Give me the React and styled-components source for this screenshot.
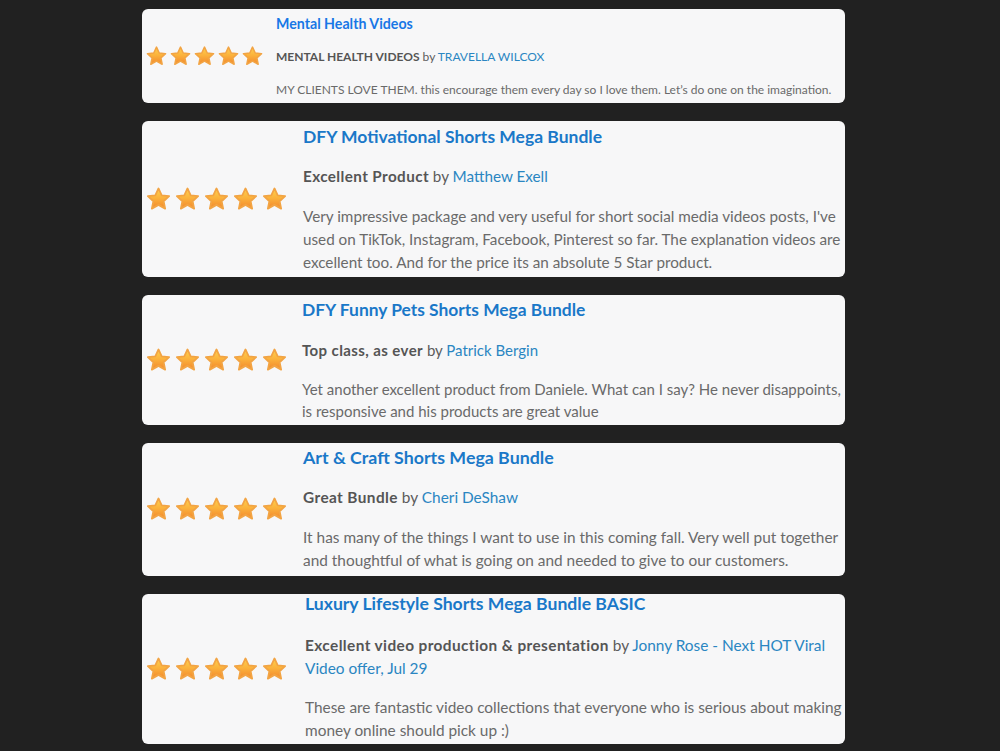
import React from "react";
import styled, { createGlobalStyle } from "styled-components";

const GlobalStyle = createGlobalStyle`
  html, body {
    margin: 0;
    padding: 0;
    background: #212121;
  }
  body {
    font-family: Lato, "Open Sans", "Noto Sans", sans-serif;
  }
`;

const Page = styled.main`
  display: flex;
  flex-direction: column;
  gap: 18px;
  padding: 9px 0 0 142px;
  width: 703px;
  min-height: 751px;
  box-sizing: content-box;
`;

const Card = styled.article`
  display: flex;
  align-items: stretch;
  background: #f7f7f8;
  border-radius: 6px;
  overflow: hidden;
`;

const StarCol = styled.div`
  flex: 0 0 ${(p) => p.$width}px;
  display: flex;
  align-items: center;
  padding-left: 3px;
  box-sizing: border-box;
  gap: ${(p) => p.$gap}px;
`;

const Content = styled.div`
  flex: 1;
  min-width: 0;
  display: flex;
  flex-direction: column;
  gap: ${(p) => p.$gap}px;
  padding: ${(p) => p.$top}px 2px ${(p) => p.$bottom}px 0;
  font-size: ${(p) => p.$size}px;
  line-height: ${(p) => p.$lh}px;
`;

const Title = styled.h3`
  margin: 0 0 ${(p) => p.$extra || 0}px;
  font-size: ${(p) => p.$size}px;
  line-height: ${(p) => p.$lh}px;
  font-weight: 700;
  color: ${(p) => p.$color || "#1a78c8"};
`;

const Headline = styled.p`
  margin: 0;
  color: #5c5c5c;
`;

const Strong = styled.strong`
  font-weight: 700;
  color: #555;
  letter-spacing: ${(p) => p.$ls || 0}px;
`;

const Author = styled.span`
  color: #2a86c2;
`;

const Body = styled.p`
  margin: 0;
  color: #6a6a6a;
`;

function Star({ size }) {
  return (
    <svg width={size} height={size} viewBox="0 0 24 24" aria-hidden="true">
      <defs>
        <linearGradient id="starGrad" x1="0" y1="0" x2="0" y2="1">
          <stop offset="0" stopColor="#ffd34e" />
          <stop offset="0.5" stopColor="#fbb03b" />
          <stop offset="1" stopColor="#f2872c" />
        </linearGradient>
      </defs>
      <path
        d="M12 2.2l2.85 6.1 6.6.75-4.9 4.5 1.35 6.55L12 16.8l-5.9 3.3 1.35-6.55-4.9-4.5 6.6-.75z"
        fill="url(#starGrad)"
        stroke="#f2a444"
        strokeWidth="1.6"
        strokeLinejoin="round"
      />
    </svg>
  );
}

const reviews = [
  {
    title: "Mental Health Videos",
    headline: "MENTAL HEALTH VIDEOS",
    author: "TRAVELLA WILCOX",
    body: "MY CLIENTS LOVE THEM. this encourage them every day so I love them. Let’s do one on the imagination.",
    col: 134, star: 23, starGap: 1,
    titleSize: 14.2, size: 12, lh: 18, strongLs: 0, gap: 15, top: 6, bottom: 4,
    titleColor: "#1877e6",
  },
  {
    title: "DFY Motivational Shorts Mega Bundle",
    headline: "Excellent Product",
    author: "Matthew Exell",
    body: "Very impressive package and very useful for short social media videos posts, I've used on TikTok, Instagram, Facebook, Pinterest so far. The explanation videos are excellent too. And for the price its an absolute 5 Star product.",
    col: 161, star: 27, starGap: 2,
    titleSize: 17.5, size: 15.25, lh: 23, strongLs: 0.4, gap: 17, top: 3.5, bottom: 3.5,
  },
  {
    title: "DFY Funny Pets Shorts Mega Bundle",
    headline: "Top class, as ever",
    author: "Patrick Bergin",
    body: "Yet another excellent product from Daniele. What can I say? He never disappoints, is responsive and his products are great value",
    col: 160, star: 27, starGap: 2,
    titleSize: 17.4, size: 15, lh: 22, strongLs: 0.4, gap: 17.5, top: 4, bottom: 3,
  },
  {
    title: "Art & Craft Shorts Mega Bundle",
    headline: "Great Bundle",
    author: "Cheri DeShaw",
    body: "It has many of the things I want to use in this coming fall. Very well put together and thoughtful of what is going on and needed to give to our customers.",
    col: 161, star: 27, starGap: 2,
    titleSize: 17.8, size: 15.4, lh: 23, strongLs: 0.4, gap: 17, top: 2.5, bottom: 4.5,
  },
  {
    title: "Luxury Lifestyle Shorts Mega Bundle BASIC",
    headline: "Excellent video production & presentation",
    author: "Jonny Rose - Next HOT Viral Video offer, Jul 29",
    body: "These are fantastic video collections that everyone who is serious about making money online should pick up :)",
    col: 163, star: 27, starGap: 2,
    titleSize: 17.6, size: 15.4, lh: 23, strongLs: 0.4, gap: 16, top: 0, bottom: 2.5,
    titleLh: 20, titleExtra: 3.5,
  },
];

export default function App() {
  return (
    <>
      <GlobalStyle />
      <Page>
        {reviews.map((r) => (
          <Card key={r.title}>
            <StarCol $width={r.col} $gap={r.starGap}>
              {[0, 1, 2, 3, 4].map((i) => (
                <Star key={i} size={r.star} />
              ))}
            </StarCol>
            <Content
              $gap={r.gap}
              $top={r.top}
              $bottom={r.bottom}
              $size={r.size}
              $lh={r.lh}
            >
              <Title
                $size={r.titleSize}
                $lh={r.titleLh || r.lh}
                $color={r.titleColor}
                $extra={r.titleExtra}
              >
                {r.title}
              </Title>
              <Headline>
                <Strong $ls={r.strongLs}>{r.headline}</Strong> by{" "}
                <Author>{r.author}</Author>
              </Headline>
              <Body>{r.body}</Body>
            </Content>
          </Card>
        ))}
      </Page>
    </>
  );
}
